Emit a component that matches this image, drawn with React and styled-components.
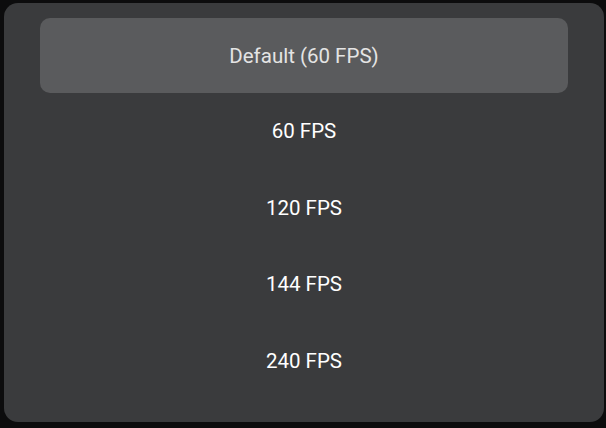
import React from "react";
import styled, { createGlobalStyle } from "styled-components";

const Global = createGlobalStyle`
  html, body { margin: 0; padding: 0; background: #0c0c0d; }
  body { width: 606px; height: 428px; overflow: hidden; }
`;

const Screen = styled.div`
  width: 606px;
  height: 428px;
  box-sizing: border-box;
  padding: 3px 2px 6px 4px;
  display: flex;
`;

const Panel = styled.div`
  flex: 1;
  background: #3a3b3d;
  border-radius: 14px;
  padding: 15px 36px 0 36px;
  display: flex;
  flex-direction: column;
`;

const Option = styled.div`
  height: ${(p) => (p.$selected ? "75px" : "76.5px")};
  flex-shrink: 0;
  display: flex;
  align-items: center;
  justify-content: center;
  border-radius: 10px;
  background: ${(p) => (p.$selected ? "#5a5b5d" : "transparent")};
  color: ${(p) => (p.$selected ? "#e4e4e4" : "#ffffff")};
  font-family: Roboto, "Noto Sans", sans-serif;
  font-size: 20.5px;
`;

const options = ["Default (60 FPS)", "60 FPS", "120 FPS", "144 FPS", "240 FPS"];

export default function App() {
  return (
    <>
      <Global />
      <Screen>
        <Panel>
          {options.map((o, i) => (
            <Option key={o} $selected={i === 0}>
              {o}
            </Option>
          ))}
        </Panel>
      </Screen>
    </>
  );
}
